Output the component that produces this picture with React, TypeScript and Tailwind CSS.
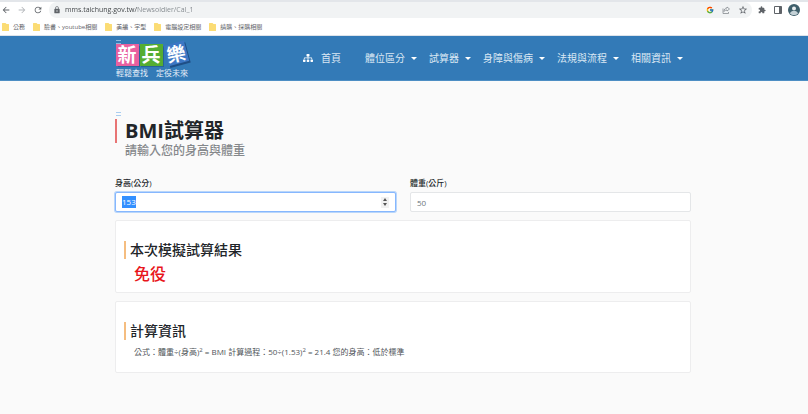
import React, { useEffect, useRef, useState } from "react";
import { FcGoogle } from "react-icons/fc";
import {
  MdArrowBack,
  MdArrowForward,
  MdExtension,
  MdLock,
  MdRefresh,
  MdStarBorder,
} from "react-icons/md";
import { FaSitemap } from "react-icons/fa";

const bookmarks = [
  "公務",
  "臉書、youtube相關",
  "美編、字型",
  "電腦設定相關",
  "請購、採購相關",
];

const menus = ["體位區分", "試算器", "身障與傷病", "法規與流程", "相關資訊"];

const BrowserBar: React.FC = () => {
  const [url, setUrl] = useState("mms.taichung.gov.tw/Newsoldier/Cal_1");
  return (
    <div className="border-t-2 border-[#e3e6ea] bg-white">
      <div className="flex h-4 items-center gap-1.5 pr-2 pl-px text-[#5f6368]">
        <button type="button" aria-label="上一頁" className="w-2.5">
          <MdArrowBack className="size-2.5" />
        </button>
        <button type="button" aria-label="下一頁" className="w-2.5 text-[#b4b7bb]">
          <MdArrowForward className="size-2.5" />
        </button>
        <button type="button" aria-label="重新整理" className="w-2.5">
          <MdRefresh className="size-2.5" />
        </button>
        <div className="flex h-4 flex-1 items-center gap-2 rounded-full bg-[#f1f3f4] px-1">
          <div className="flex flex-1 items-center gap-1">
            <MdLock className="size-2 shrink-0" />
            <input
              type="text"
              aria-label="網址"
              value={url}
              onChange={(e) => setUrl(e.target.value)}
              className="w-full bg-[linear-gradient(to_right,#3c4043_72px,#80868b_72px)] bg-clip-text text-[7px] leading-3 text-transparent outline-none"
            />
          </div>
          <FcGoogle className="size-2" />
          <button type="button" aria-label="分享" className="w-2">
            <svg viewBox="0 0 16 16" className="size-2" fill="none" stroke="#80868b" strokeWidth="1.5">
              <path d="M2 5v10h11v-3" />
              <path d="M10 2l5 4-5 4V8C7 8 5 9 4 11c0-4 2-7 6-7z" strokeLinejoin="round" />
            </svg>
          </button>
          <button type="button" aria-label="加入書籤" className="w-2.5">
            <MdStarBorder className="size-2.5" />
          </button>
        </div>
        <button type="button" aria-label="擴充功能" className="w-2.5">
          <MdExtension className="size-2" />
        </button>
        <button type="button" aria-label="側邊面板" className="w-2">
          <svg viewBox="0 0 16 16" className="size-2">
            <path d="M1 1h14v14H1z" fill="none" stroke="#5f6368" strokeWidth="2" />
            <path d="M10 1h5v14h-5z" fill="#5f6368" />
          </svg>
        </button>
        <button type="button" aria-label="個人資料" className="w-3">
          <svg viewBox="0 0 24 24" className="size-3">
            <circle cx="12" cy="12" r="12" fill="#3f5f6b" />
            <circle cx="12" cy="9" r="4" fill="#e8eef0" />
            <path d="M4 19c1-4 4-5 8-5s7 1 8 5c-4 4-12 4-16 0z" fill="#c4d1d6" />
          </svg>
        </button>
      </div>
      <nav aria-label="書籤" className="flex h-[18px] items-center gap-2 border-b border-[#dde3ea] px-0.5">
        {bookmarks.map((name) => (
          <a key={name} href="#" className="flex items-center gap-1 text-[6px] leading-3 text-[#5f6368]">
            <svg viewBox="0 0 14 16" className="h-2 w-[7px]">
              <path d="M1 0h6l2 2h4q1 0 1 1v12q0 1-1 1H1q-1 0-1-1V1q0-1 1-1z" fill="#fbdc75" />
            </svg>
            {name}
          </a>
        ))}
      </nav>
    </div>
  );
};

const Logo: React.FC = () => (
  <a href="#" aria-label="新兵樂" className="block">
    <svg viewBox="0 0 76 40" className="h-10 w-[76px]">
      <path d="M1 2.5h5M1 5.5h5" stroke="#8fbce2" strokeWidth="1" />
      <rect x="3" y="8" width="22" height="21" fill="#27639a" />
      <rect x="26" y="8" width="23" height="21" fill="#27639a" />
      <rect x="1" y="6" width="23" height="22" fill="#e8609f" />
      <rect x="25" y="6" width="23" height="22" fill="#55ad32" />
      <g transform="rotate(-15 61 16)">
        <rect x="52" y="7" width="21" height="21" fill="#1f4f86" />
        <rect x="51" y="5" width="21" height="21" fill="#3c77c4" />
      </g>
      <g fill="#fff" fontSize="19" fontWeight="700" textAnchor="middle">
        <text x="12" y="24">新</text>
        <text x="36" y="24">兵</text>
        <text x="61" y="23" transform="rotate(-12 61 16)">樂</text>
      </g>
      <text x="1" y="38" fill="#e3eef8" fontSize="8">輕鬆查找　定役未來</text>
    </svg>
  </a>
);

const SiteHeader: React.FC = () => (
  <header className="border-b border-[#4d8ec4] bg-[#337ab7]">
    <div className="mr-[117px] ml-[115px] flex h-11 items-center justify-between">
      <Logo />
      <nav aria-label="主選單" className="flex items-center gap-3 pr-2 text-[10px] leading-4 text-[#dbe8f4]">
        <a href="#" className="mr-3 flex items-center gap-2">
          <FaSitemap className="size-2.5 text-white" />
          首頁
        </a>
        {menus.map((menu) => (
          <button key={menu} type="button" className="flex items-center gap-1.5">
            {menu}
            <svg viewBox="0 0 6 3" className="h-[3px] w-1.5" fill="#fff">
              <path d="M0 0h6L3 3z" />
            </svg>
          </button>
        ))}
      </nav>
    </div>
  </header>
);

interface CardProps {
  title: string;
  children: React.ReactNode;
}

const Card: React.FC<CardProps> = ({ title, children }) => (
  <section className="mt-2 rounded-xs border border-[#ededee] bg-white px-2 pt-5 pb-2">
    <h2 className="border-l-2 border-[#f5bd80] pl-1 text-[14px] leading-[18px] font-medium text-[#212529]">
      {title}
    </h2>
    {children}
  </section>
);

const App: React.FC = () => {
  const [height, setHeight] = useState("153");
  const [weight, setWeight] = useState("50");
  const heightRef = useRef<HTMLInputElement>(null);

  useEffect(() => {
    heightRef.current?.focus();
    heightRef.current?.select();
  }, []);

  const step = (amount: number) => setHeight(String(Number(height) + amount));
  const meters = Number(height) / 100;
  const bmi = (Number(weight) / (meters * meters)).toFixed(1);

  return (
    <div className="min-h-screen bg-[#fafafa] font-['Open_Sans','Noto_Sans_CJK_TC',sans-serif] text-[#212529]">
      <BrowserBar />
      <SiteHeader />
      <main className="mr-[117px] ml-[115px] pt-[30px] pb-10">
        <svg viewBox="0 0 5 6" className="ml-px h-1.5 w-[5px]">
          <path d="M0 1.5h5M0 4.5h5" stroke="#a9cdf0" strokeWidth="1" />
        </svg>
        <h1 className="mt-0.5 border-l-2 border-[#e87474] pl-2 text-[20px] leading-6 font-semibold">
          <span className="font-bold">BMI</span>試算器
        </h1>
        <p className="pl-2.5 text-[12px] leading-4 font-medium text-[#85888b]">請輸入您的身高與體重</p>

        <div className="mt-4 grid grid-cols-2 gap-3.5 text-[8px]">
          <div>
            <label htmlFor="height" className="block leading-4 font-medium">
              身高(公分)
            </label>
            <div className="mt-px flex h-5 items-center rounded-xs border border-[#86b7fe] bg-white pr-1.5 pl-1.5 ring-1 ring-[#b9d6fa]">
              <input
                id="height"
                ref={heightRef}
                type="number"
                value={height}
                onChange={(e) => setHeight(e.target.value)}
                className="min-w-0 flex-1 [appearance:textfield] leading-3 text-[#6c757d] outline-none selection:bg-[#3390ff] selection:text-white [&::-webkit-inner-spin-button]:appearance-none"
              />
              <div className="flex w-2 flex-col gap-px bg-[#f1f1f1] py-px">
                <button type="button" aria-label="增加" onClick={() => step(1)} className="flex h-1 items-center justify-center">
                  <svg viewBox="0 0 4 3" className="h-[3px] w-1" fill="#555">
                    <path d="M0 3h4L2 0z" />
                  </svg>
                </button>
                <button type="button" aria-label="減少" onClick={() => step(-1)} className="flex h-1 items-center justify-center">
                  <svg viewBox="0 0 4 3" className="h-[3px] w-1" fill="#555">
                    <path d="M0 0h4L2 3z" />
                  </svg>
                </button>
              </div>
            </div>
          </div>
          <div>
            <label htmlFor="weight" className="block leading-4 font-medium">
              體重(公斤)
            </label>
            <input
              id="weight"
              type="number"
              value={weight}
              onChange={(e) => setWeight(e.target.value)}
              className="mt-px block h-5 w-full [appearance:textfield] rounded-xs border border-[#e4e6e8] bg-white px-1.5 text-[#6c757d] outline-none"
            />
          </div>
        </div>

        <Card title="本次模擬試算結果">
          <p className="mt-1 pt-px pl-2.5 text-[16px] leading-5 font-medium text-[#e8151b]">免役</p>
        </Card>
        <Card title="計算資訊">
          <p className="mt-1 mb-1 pl-2.5 text-[8px] leading-4 text-[#50555a]">
            公式：體重÷(身高)<sup>2</sup> = BMI 計算過程：{weight}÷({meters})<sup>2</sup> = {bmi} 您的身高：低於標準
          </p>
        </Card>
      </main>
    </div>
  );
};

export default App;
